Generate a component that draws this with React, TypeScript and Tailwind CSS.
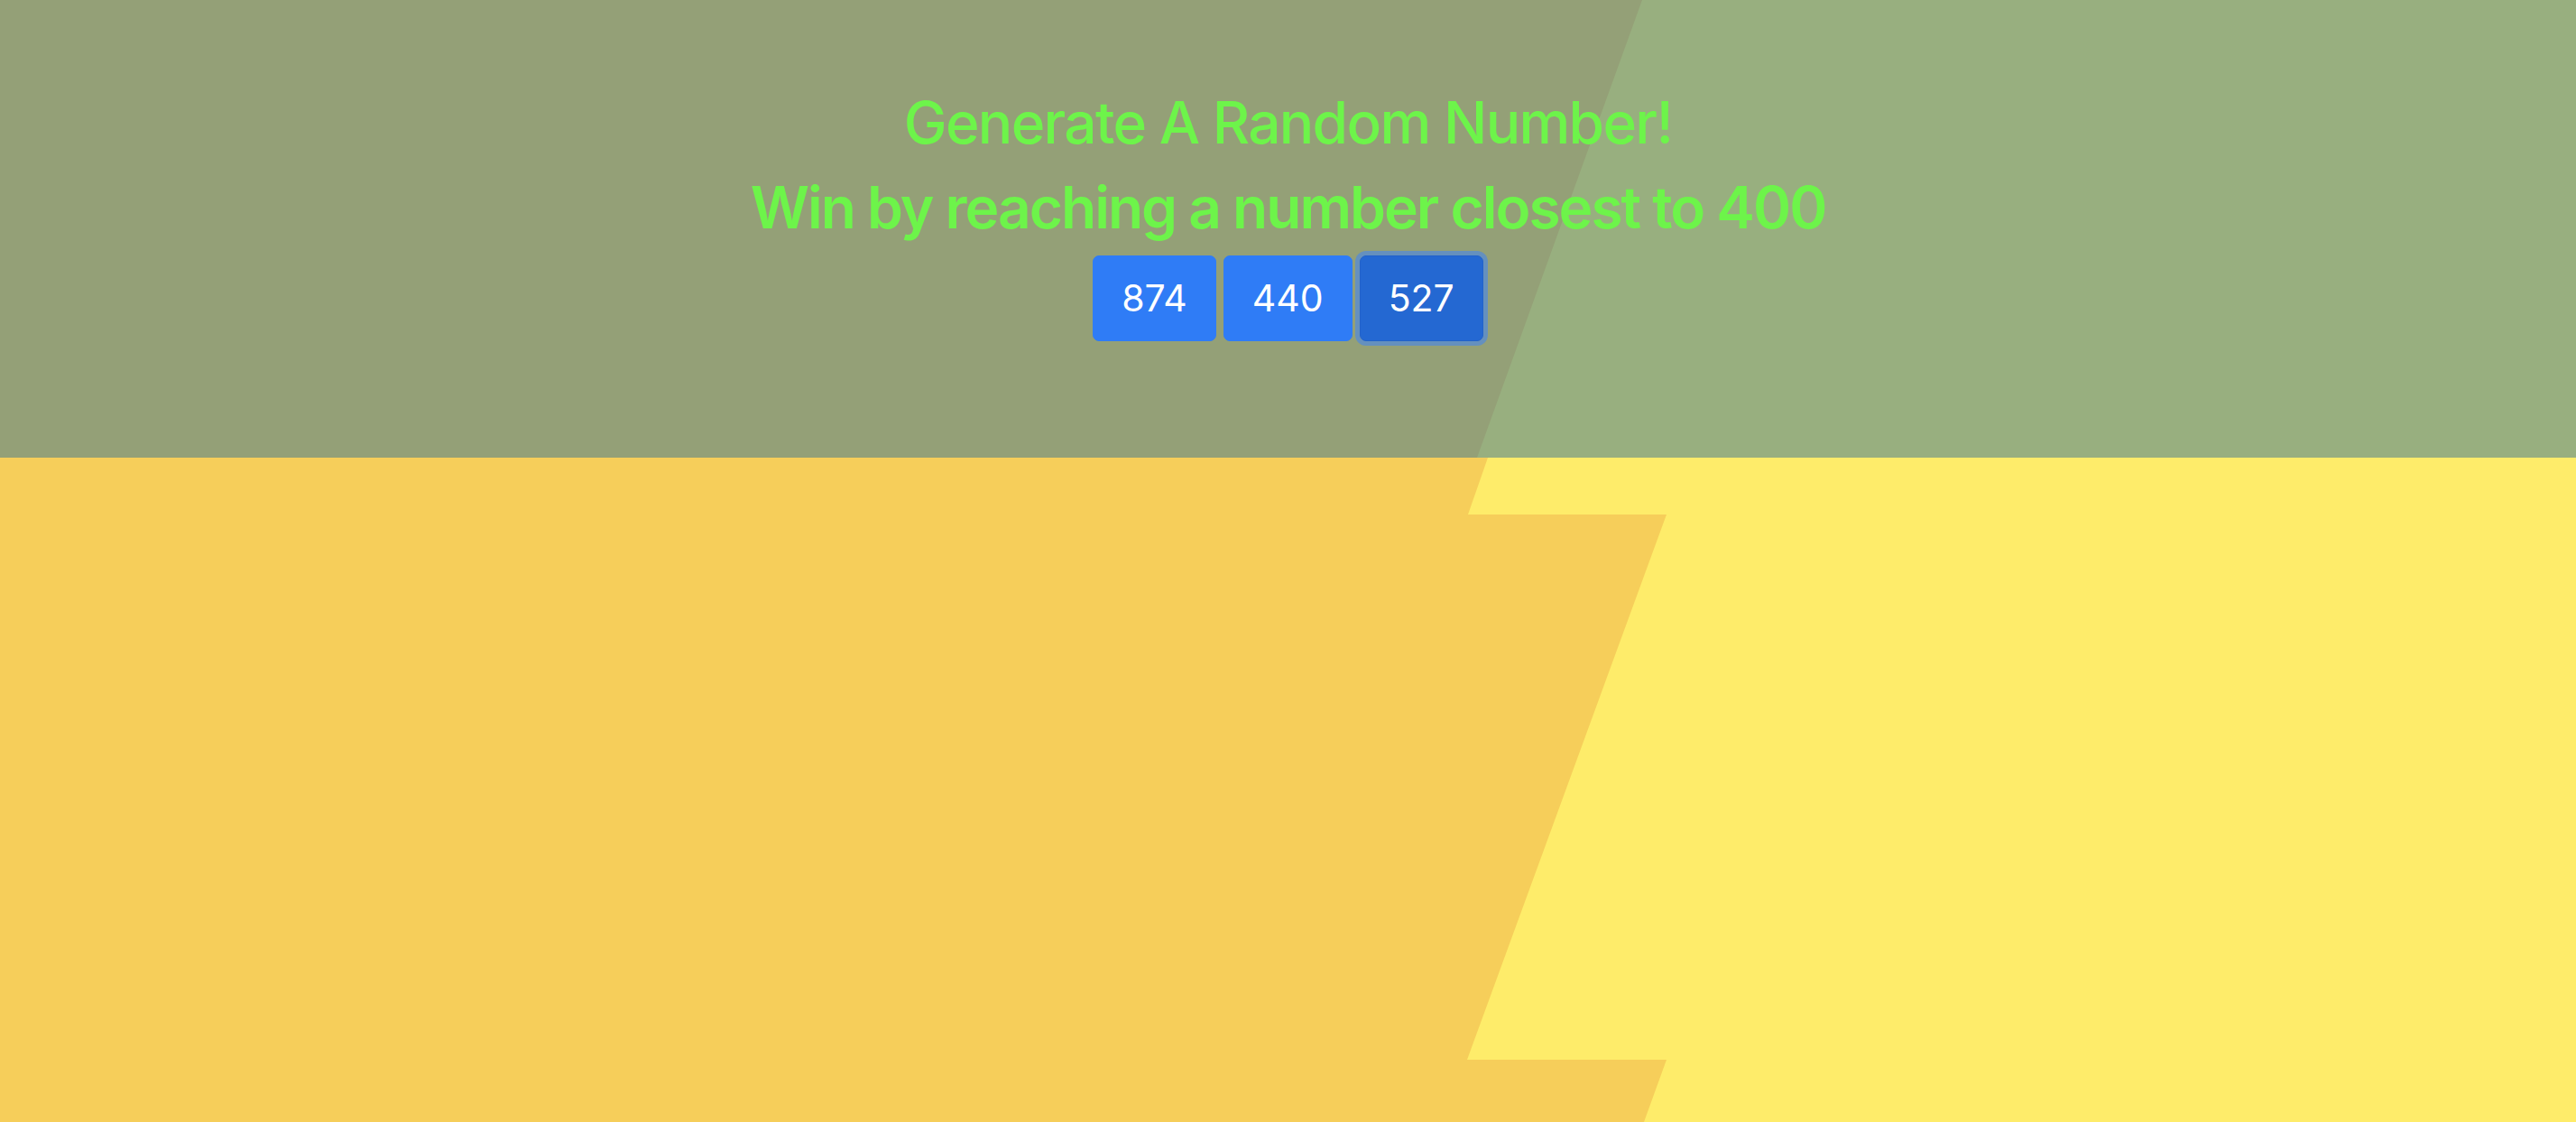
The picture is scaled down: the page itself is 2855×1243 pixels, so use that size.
import { useState } from "react"

const numbers: Array<number> = [874, 440, 527]

const App = () => {
    const [active, setActive] = useState<number>(2)

    return (
        <div className="relative min-h-screen w-full overflow-hidden bg-[#feec6a] font-['Inter','Liberation_Sans',sans-serif]">
            {/* zigzag backdrop */}
            <svg
                className="absolute inset-0 h-full w-full"
                viewBox="0 0 2855 1243"
                preserveAspectRatio="none"
            >
                <rect x="0" y="0" width="2855" height="1243" fill="#feec6a" />
                <polygon
                    fill="#f6ce5a"
                    points="0,0 1820,0 1637,507 1649,507 1627,570 1847,570 1626,1174 1847,1174 1822,1243 0,1243"
                />
            </svg>

            <header className="relative z-10 flex h-[507px] flex-col items-center bg-[rgba(50,114,147,0.5)] pt-[89px] text-[#6df44a]">
                <h1 className="text-[64px] font-medium leading-[94px] tracking-[-1.7px]">Generate A Random Number!</h1>
                <h2 className="text-[64px] font-semibold leading-[94px] tracking-[-2px]">Win by reaching a number closest to 400</h2>
                <div className="mt-[6px] flex gap-[8px]">
                    {numbers.map((n, key) => (
                        <button
                            key={key}
                            onClick={() => setActive(key)}
                            className={
                                key === active
                                    ? "rounded-[7px] border border-[#2262c9] bg-[#2468d2] px-[31px] py-[16px] text-[41px] leading-[61px] text-white ring-[5px] ring-[#6590be]"
                                    : "rounded-[7px] border border-[#2f7cf6] bg-[#2f7cf6] px-[31px] py-[16px] text-[41px] leading-[61px] text-white"
                            }
                        >
                            {n}
                        </button>
                    ))}
                </div>
            </header>
        </div>
    )
}

export default App
